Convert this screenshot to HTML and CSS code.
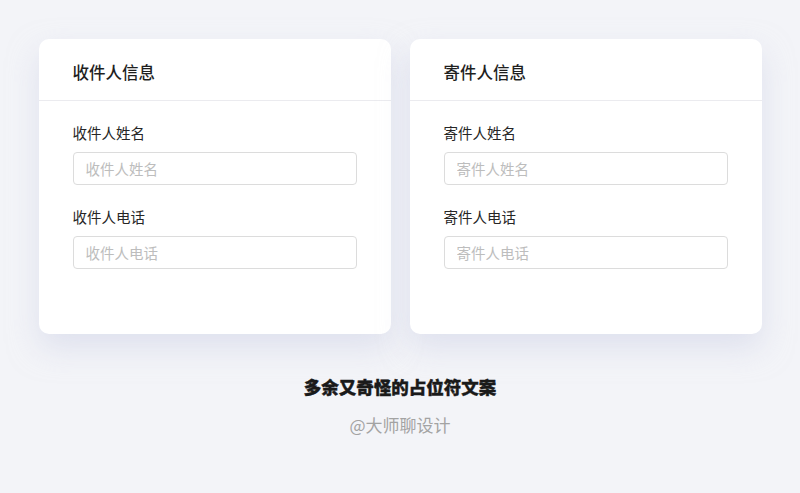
FILE: index.html
```html
<!DOCTYPE html>
<html>
<head>
    <title>填写信息</title>
    <link rel="stylesheet" href="styles.css">
</head>
<body>
<div class="cards">
    <div class="card">
        <div class="card-header">收件人信息</div>
        <div class="card-body">
            <div class="form-group">
                <label for="toName">收件人姓名</label>
                <input type="text" id="toName" placeholder="收件人姓名">
            </div>
            <div class="form-group">
                <label for="toPhone">收件人电话</label>
                <input type="text" id="toPhone" placeholder="收件人电话">
            </div>
        </div>
    </div>
    <div class="card">
        <div class="card-header">寄件人信息</div>
        <div class="card-body">
            <div class="form-group">
                <label for="fromName">寄件人姓名</label>
                <input type="text" id="fromName" placeholder="寄件人姓名">
            </div>
            <div class="form-group">
                <label for="fromPhone">寄件人电话</label>
                <input type="text" id="fromPhone" placeholder="寄件人电话">
            </div>
        </div>
    </div>
</div>
<div class="caption">
    <h2>多余又奇怪的占位符文案</h2>
    <p>@大师聊设计</p>
</div>
</body>
</html>
```

FILE: styles.css
```css
body {
    margin: 0;
    font-family: "Noto Sans CJK SC", "Noto Sans", sans-serif;
    background-color: #f3f4f8;
    color: #1f1f1f;
}
.cards {
    display: flex;
    justify-content: center;
    gap: 19px;
    padding-top: 39px;
}
.card {
    width: 352px;
    height: 295px;
    background: white;
    border-radius: 10px;
    box-shadow: 0 14px 30px rgba(205, 210, 230, 0.55);
}
.card-header {
    padding: 22px 34px 17px;
    font-size: 16.5px;
    line-height: 22px;
    font-weight: 500;
    border-bottom: 1px solid #ebebef;
}
.card-body {
    padding: 22px 34px 0;
}
.form-group {
    margin-bottom: 22px;
}
label {
    display: block;
    font-size: 14.5px;
    line-height: 20px;
    margin-bottom: 9px;
    color: #262626;
}
input {
    display: block;
    width: 100%;
    height: 33px;
    padding: 0 12px;
    border: 1px solid #dcdcdc;
    border-radius: 4px;
    box-sizing: border-box;
    font-family: inherit;
    font-size: 14.5px;
    color: #333;
    outline: none;
}
input::placeholder {
    color: #bdbdbd;
}
.caption {
    text-align: center;
    margin-top: 41px;
}
.caption h2 {
    margin: 0;
    font-size: 17.5px;
    line-height: 24px;
    font-weight: 900;
    color: #1a1a1a;
    -webkit-text-stroke: 0.4px #1a1a1a;
}
.caption p {
    margin: 14px 0 0;
    font-size: 17px;
    line-height: 24px;
    color: #a3a3a3;
}
```
